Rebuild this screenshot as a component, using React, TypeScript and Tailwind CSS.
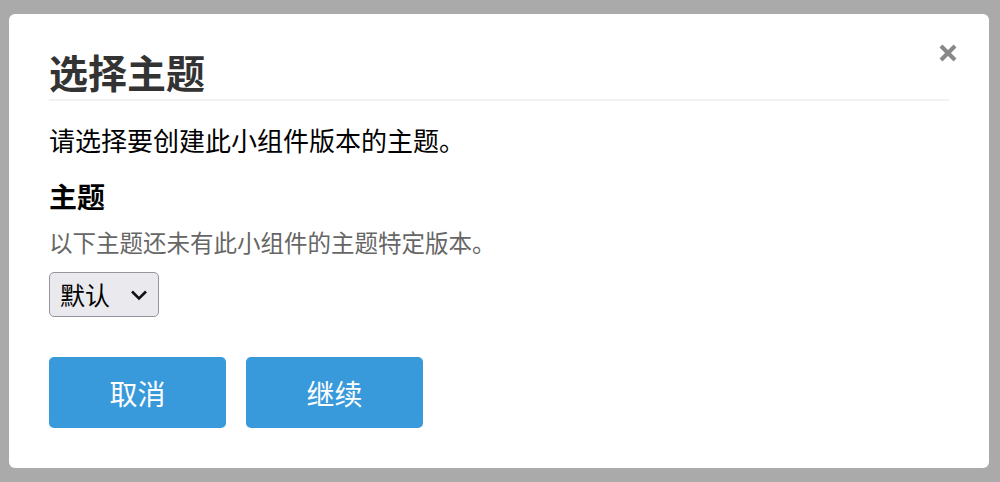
export default function App() {
  const font = { fontFamily: '"Noto Sans CJK SC", "Noto Sans", sans-serif' };

  return (
    <div className="h-[482px] w-[1000px] bg-[#aaaaaa] pt-[14px] pl-[9px]" style={font}>
      <div className="relative w-[980px] rounded-[6px] bg-white px-10 pt-[34px] pb-10">
        {/* close */}
        <button
          type="button"
          aria-label="关闭"
          className="absolute top-[29px] right-[31px] flex h-[20px] w-[20px] items-center justify-center"
        >
          <svg width="20" height="20" viewBox="0 0 20 20">
            <path d="M3 3L17 17M17 3L3 17" stroke="#888888" strokeWidth="4.2" strokeLinecap="butt" />
          </svg>
        </button>

        <h2 className="border-b-2 border-[#f2f2f2] pb-1 text-[39px] leading-[47px] font-bold text-[#333333]">
          选择主题
        </h2>

        <p className="mt-[22px] text-[26px] leading-[34px] text-black">
          请选择要创建此小组件版本的主题。
        </p>

        <h3 className="mt-[22px] text-[28px] leading-[34px] font-bold text-black">主题</h3>
        <p className="mt-[13px] text-[23.5px] leading-[32px] text-[#666666]">
          以下主题还未有此小组件的主题特定版本。
        </p>

        <div className="mt-[14px] flex h-[45px] w-[110px] items-center justify-between rounded-[5px] border border-[#96949f] bg-[#e9e9ee] pr-[10px] pl-[10px]">
          <span className="text-[25px] leading-none text-black">默认</span>
          <svg width="18" height="18" viewBox="0 0 18 18">
            <path d="M2 5.5L9 12.5L16 5.5" fill="none" stroke="#111111" strokeWidth="2.6" />
          </svg>
        </div>

        <div className="mt-10 flex gap-5">
          <button
            type="button"
            className="h-[71px] w-[177px] rounded-[5px] bg-[#3899db] text-[28px] text-white"
          >
            取消
          </button>
          <button
            type="button"
            className="h-[71px] w-[177px] rounded-[5px] bg-[#3899db] text-[28px] text-white"
          >
            继续
          </button>
        </div>
      </div>
    </div>
  );
}
